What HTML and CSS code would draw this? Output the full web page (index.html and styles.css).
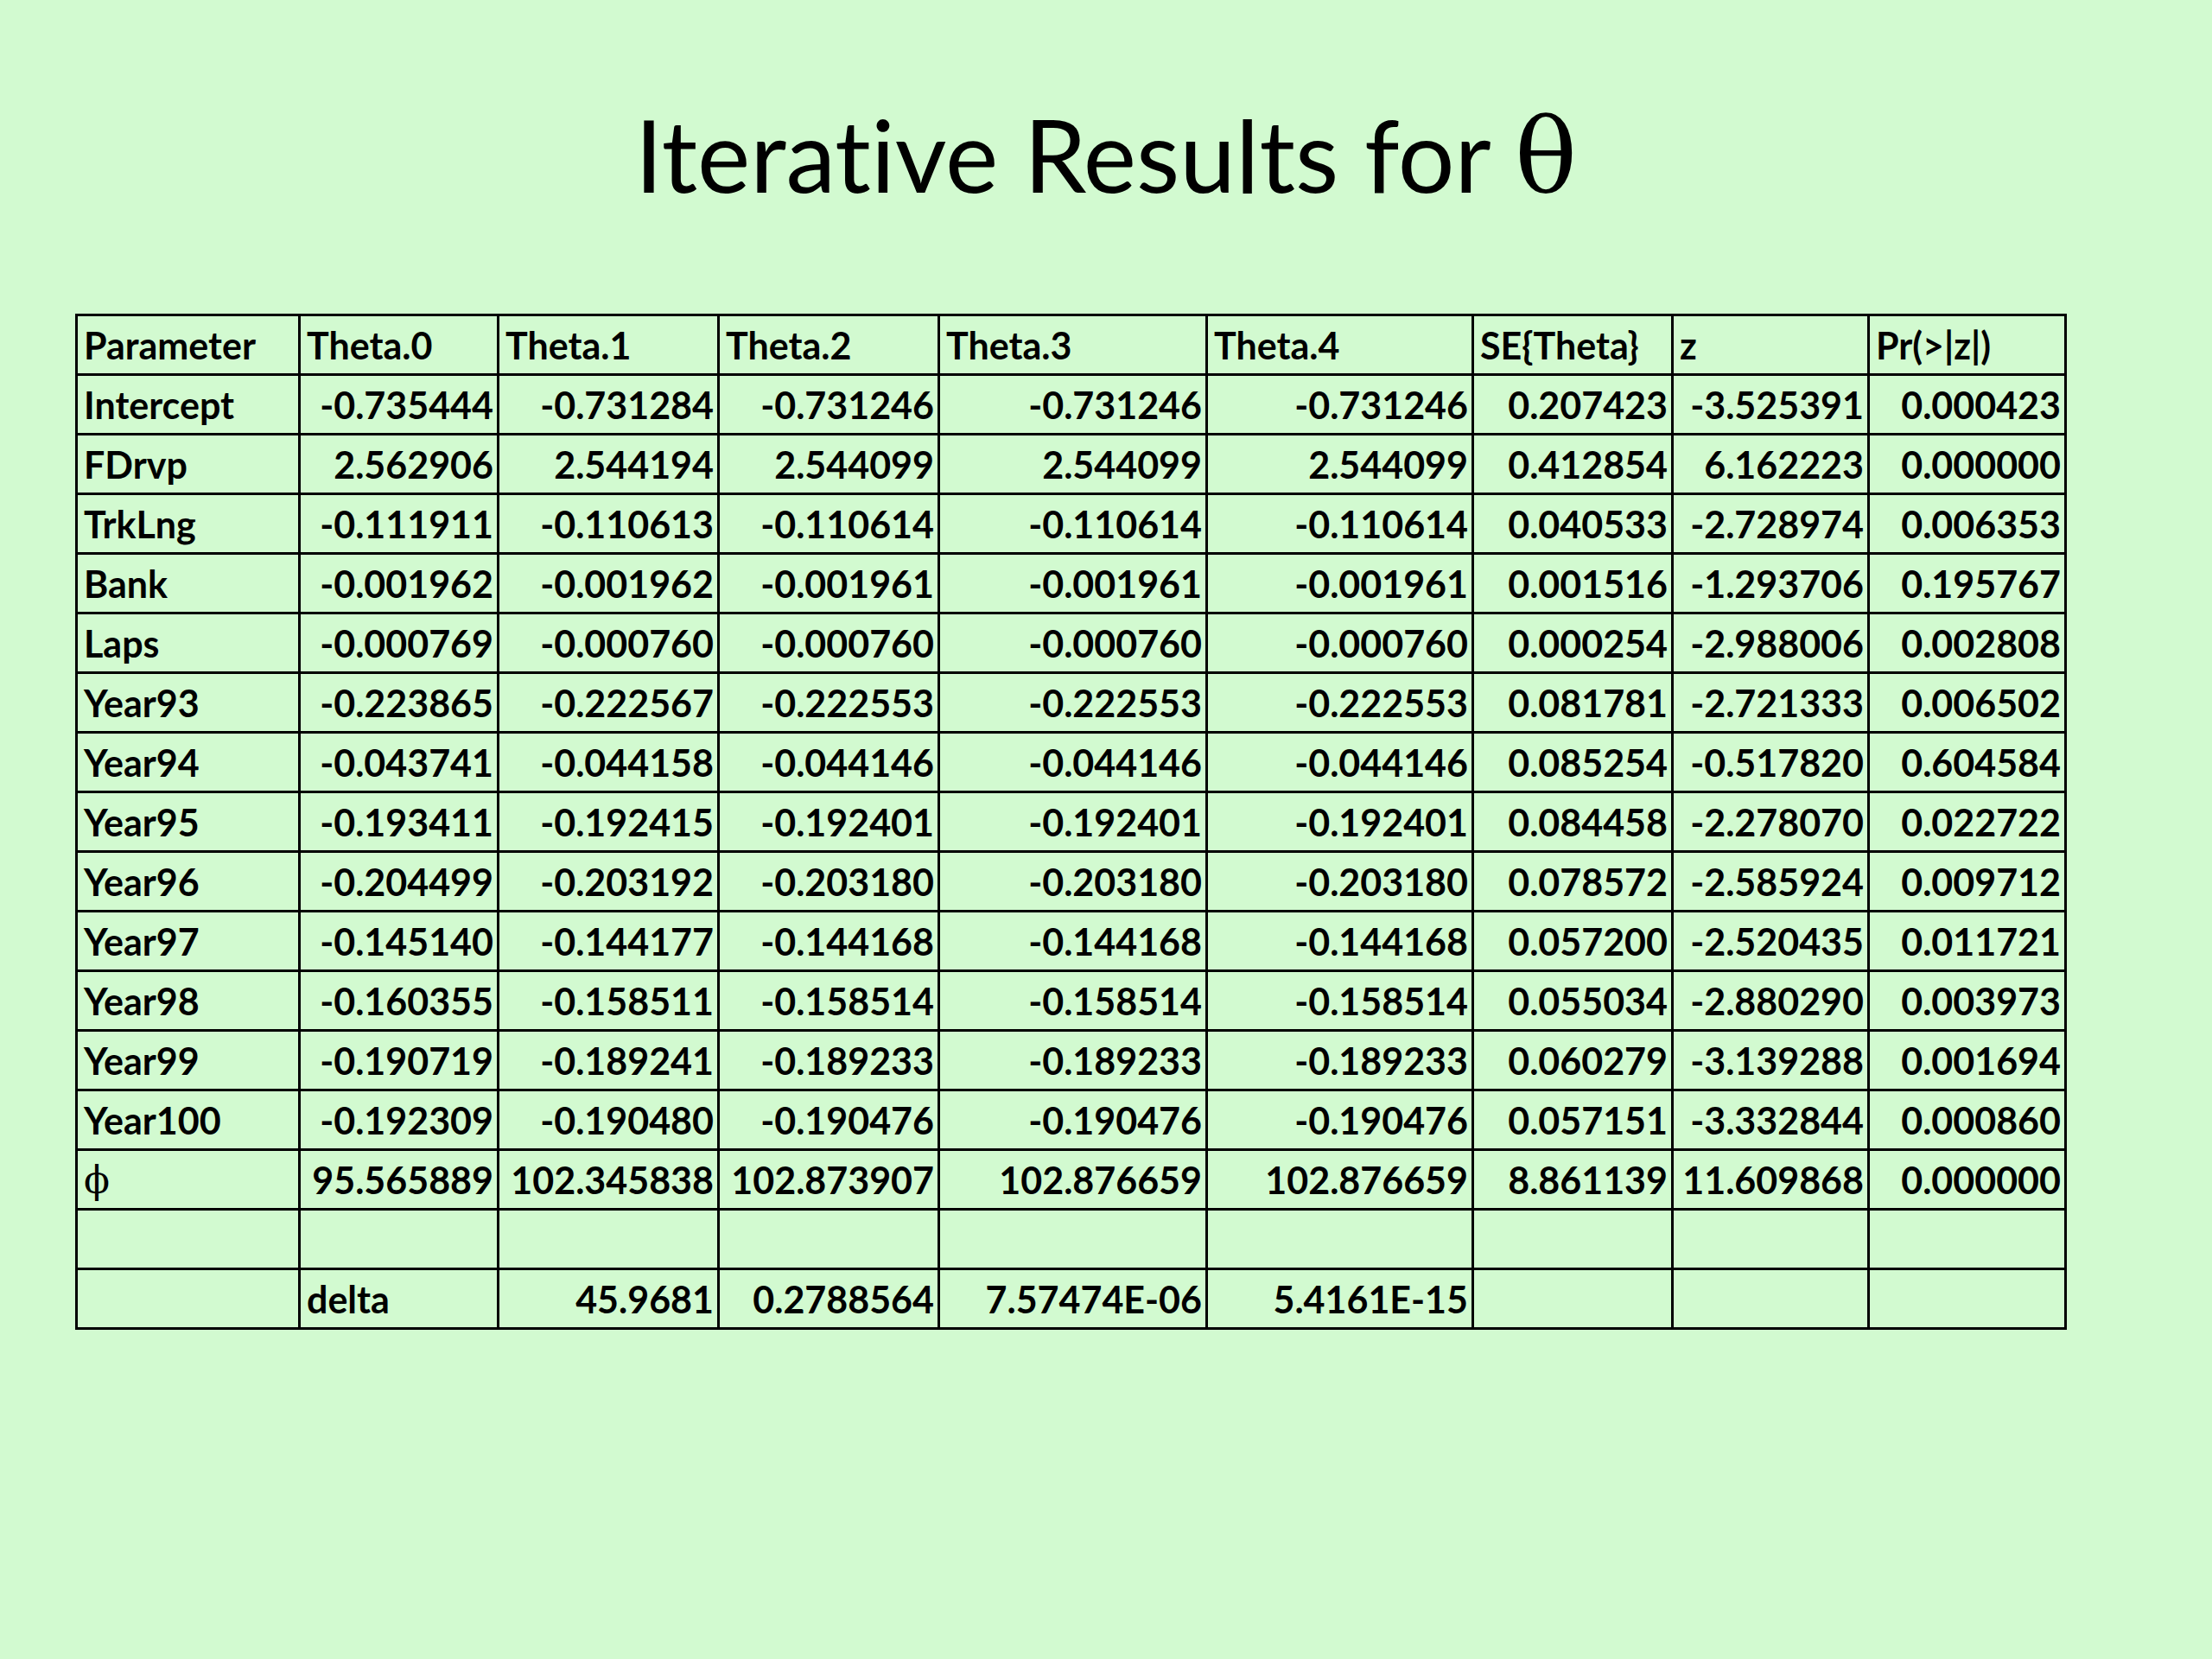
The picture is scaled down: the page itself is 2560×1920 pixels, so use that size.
FILE: index.html
```html
<!DOCTYPE html>
<html>
<head>
<meta charset="utf-8">
<link rel="stylesheet" href="styles.css">
</head>
<body>
<div class="slide">
  <h1 class="title">Iterative Results for <span class="greek">θ</span></h1>
  <table class="results">
    <colgroup>
      <col class="c1"><col class="c2"><col class="c3"><col class="c4"><col class="c5"><col class="c6"><col class="c7"><col class="c8"><col class="c9">
    </colgroup>
    <tr class="head"><td>Parameter</td><td>Theta.0</td><td>Theta.1</td><td>Theta.2</td><td>Theta.3</td><td>Theta.4</td><td>SE{Theta}</td><td>z</td><td>Pr(&gt;|z|)</td></tr>
    <tr><td>Intercept</td><td class="n">-0.735444</td><td class="n">-0.731284</td><td class="n">-0.731246</td><td class="n">-0.731246</td><td class="n">-0.731246</td><td class="n">0.207423</td><td class="n">-3.525391</td><td class="n">0.000423</td></tr>
    <tr><td>FDrvp</td><td class="n">2.562906</td><td class="n">2.544194</td><td class="n">2.544099</td><td class="n">2.544099</td><td class="n">2.544099</td><td class="n">0.412854</td><td class="n">6.162223</td><td class="n">0.000000</td></tr>
    <tr><td>TrkLng</td><td class="n">-0.111911</td><td class="n">-0.110613</td><td class="n">-0.110614</td><td class="n">-0.110614</td><td class="n">-0.110614</td><td class="n">0.040533</td><td class="n">-2.728974</td><td class="n">0.006353</td></tr>
    <tr><td>Bank</td><td class="n">-0.001962</td><td class="n">-0.001962</td><td class="n">-0.001961</td><td class="n">-0.001961</td><td class="n">-0.001961</td><td class="n">0.001516</td><td class="n">-1.293706</td><td class="n">0.195767</td></tr>
    <tr><td>Laps</td><td class="n">-0.000769</td><td class="n">-0.000760</td><td class="n">-0.000760</td><td class="n">-0.000760</td><td class="n">-0.000760</td><td class="n">0.000254</td><td class="n">-2.988006</td><td class="n">0.002808</td></tr>
    <tr><td>Year93</td><td class="n">-0.223865</td><td class="n">-0.222567</td><td class="n">-0.222553</td><td class="n">-0.222553</td><td class="n">-0.222553</td><td class="n">0.081781</td><td class="n">-2.721333</td><td class="n">0.006502</td></tr>
    <tr><td>Year94</td><td class="n">-0.043741</td><td class="n">-0.044158</td><td class="n">-0.044146</td><td class="n">-0.044146</td><td class="n">-0.044146</td><td class="n">0.085254</td><td class="n">-0.517820</td><td class="n">0.604584</td></tr>
    <tr><td>Year95</td><td class="n">-0.193411</td><td class="n">-0.192415</td><td class="n">-0.192401</td><td class="n">-0.192401</td><td class="n">-0.192401</td><td class="n">0.084458</td><td class="n">-2.278070</td><td class="n">0.022722</td></tr>
    <tr><td>Year96</td><td class="n">-0.204499</td><td class="n">-0.203192</td><td class="n">-0.203180</td><td class="n">-0.203180</td><td class="n">-0.203180</td><td class="n">0.078572</td><td class="n">-2.585924</td><td class="n">0.009712</td></tr>
    <tr><td>Year97</td><td class="n">-0.145140</td><td class="n">-0.144177</td><td class="n">-0.144168</td><td class="n">-0.144168</td><td class="n">-0.144168</td><td class="n">0.057200</td><td class="n">-2.520435</td><td class="n">0.011721</td></tr>
    <tr><td>Year98</td><td class="n">-0.160355</td><td class="n">-0.158511</td><td class="n">-0.158514</td><td class="n">-0.158514</td><td class="n">-0.158514</td><td class="n">0.055034</td><td class="n">-2.880290</td><td class="n">0.003973</td></tr>
    <tr><td>Year99</td><td class="n">-0.190719</td><td class="n">-0.189241</td><td class="n">-0.189233</td><td class="n">-0.189233</td><td class="n">-0.189233</td><td class="n">0.060279</td><td class="n">-3.139288</td><td class="n">0.001694</td></tr>
    <tr><td>Year100</td><td class="n">-0.192309</td><td class="n">-0.190480</td><td class="n">-0.190476</td><td class="n">-0.190476</td><td class="n">-0.190476</td><td class="n">0.057151</td><td class="n">-3.332844</td><td class="n">0.000860</td></tr>
    <tr><td><span class="phi">ϕ</span></td><td class="n">95.565889</td><td class="n">102.345838</td><td class="n">102.873907</td><td class="n">102.876659</td><td class="n">102.876659</td><td class="n">8.861139</td><td class="n">11.609868</td><td class="n">0.000000</td></tr>
    <tr><td></td><td></td><td></td><td></td><td></td><td></td><td></td><td></td><td></td></tr>
    <tr><td></td><td>delta</td><td class="n">45.9681</td><td class="n">0.2788564</td><td class="n">7.57474E-06</td><td class="n">5.4161E-15</td><td></td><td></td><td></td></tr>
  </table>
</div>
</body>
</html>
```

FILE: styles.css
```css
html, body {
  margin: 0;
  padding: 0;
  background: #d2fad0;
}
.slide {
  width: 2560px;
  height: 1920px;
  background: #d2fad0;
  padding-top: 99px;
  box-sizing: border-box;
}
.title {
  margin: 0;
  font-family: Lato, "Open Sans", sans-serif;
  font-weight: 400;
  font-size: 116px;
  line-height: 160px;
  text-align: center;
  color: #000;
  font-variant-ligatures: none;
}
.greek {
  font-family: "DejaVu Serif", "Liberation Serif", serif;
  font-size: 120px;
}
.results {
  margin-top: 101px;
  margin-left: 87px;
  width: 2302px;
  table-layout: fixed;
  border-collapse: collapse;
  font-family: Lato, "Open Sans", sans-serif;
  font-weight: 700;
  font-size: 43px;
  color: #000;
  font-variant-ligatures: none;
}
.c1 { width: 258px; }
.c2 { width: 230px; }
.c3 { width: 255px; }
.c4 { width: 255px; }
.c5 { width: 310px; }
.c6 { width: 308px; }
.c7 { width: 231px; }
.c8 { width: 227px; }
.c9 { width: 228px; }
.results tr { height: 69px; }
.results td {
  border: 3px solid #000;
  padding: 0 4px 0 7px;
  white-space: nowrap;
  overflow: hidden;
  vertical-align: middle;
  text-align: left;
}
.results td.n {
  text-align: right;
  padding-right: 4px;
}
.phi {
  font-family: "DejaVu Serif", "Liberation Serif", serif;
  font-weight: 400;
  font-size: 44px;
}
```
